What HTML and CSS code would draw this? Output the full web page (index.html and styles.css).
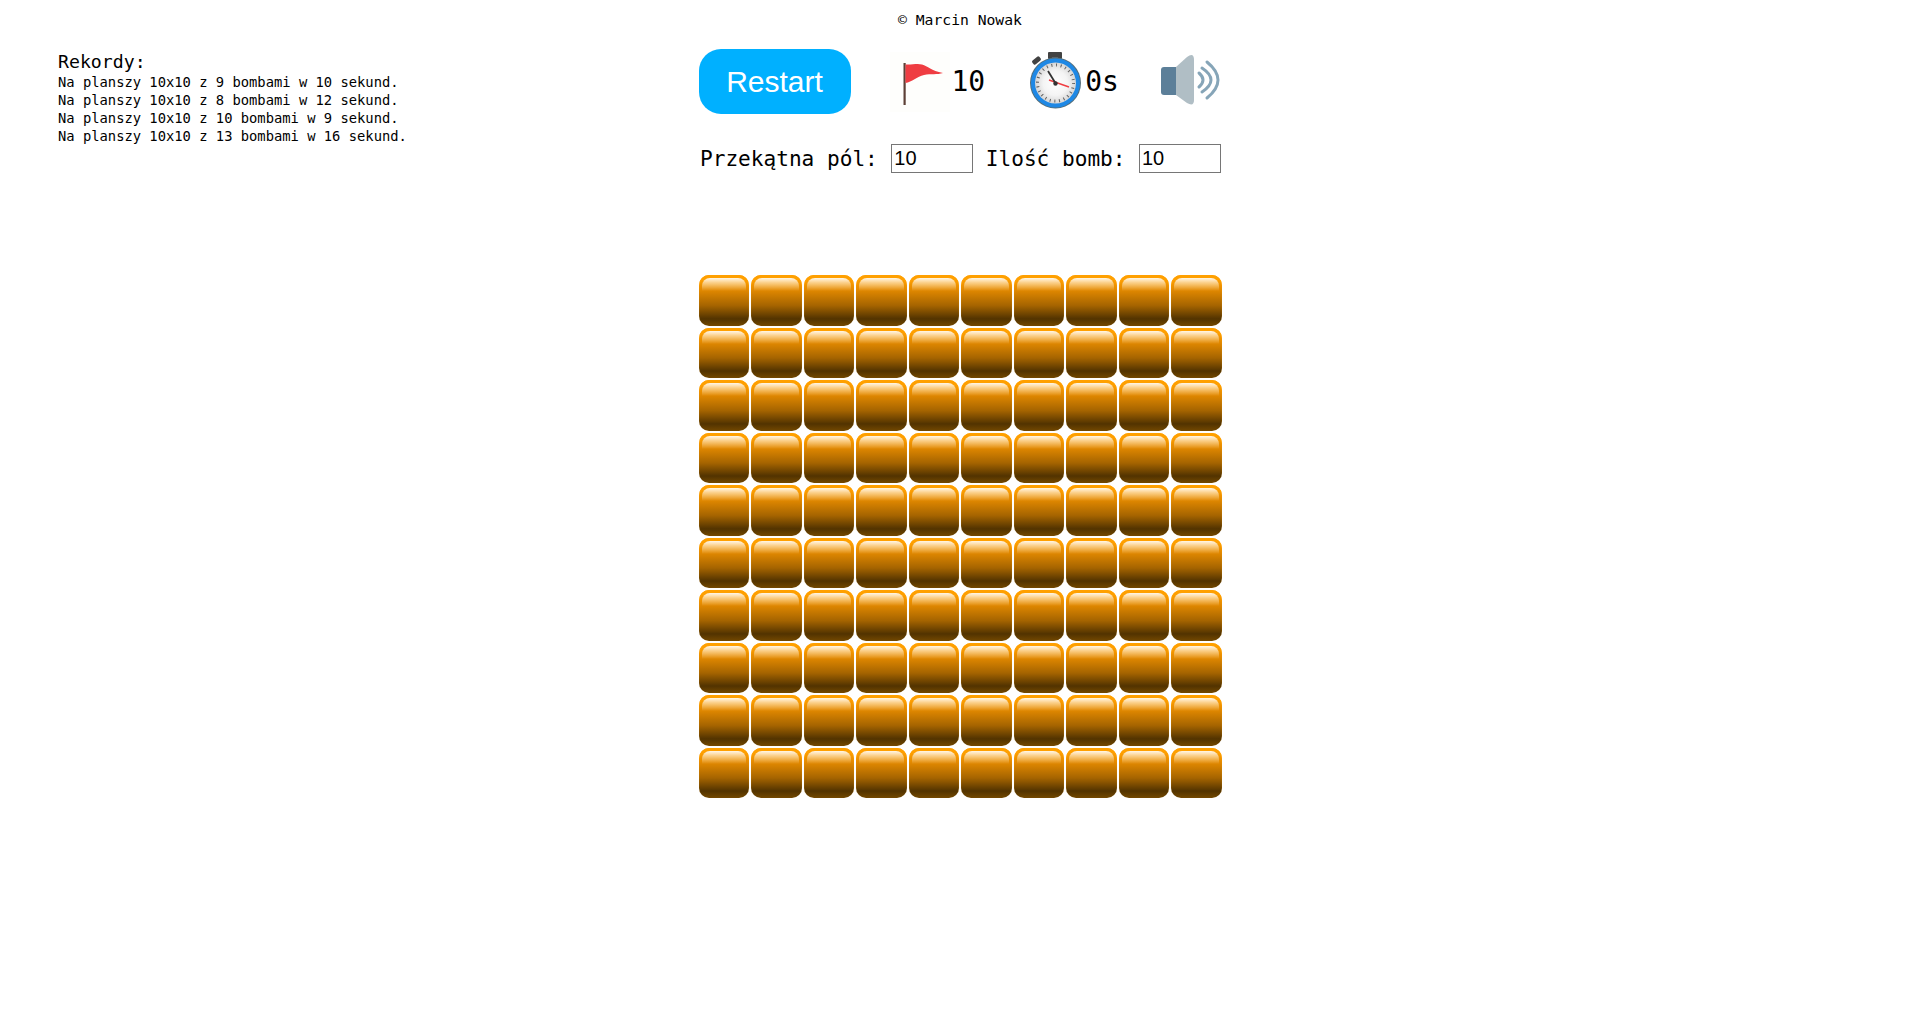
FILE: index.html
```html
<!DOCTYPE html>
<html lang="pl">
<head>
  <meta charset="UTF-8">
  <title>Saper</title>
  <link rel="stylesheet" href="styles.css">
</head>
<body>

<div class="author">© Marcin Nowak</div>

<div class="page">
  <div class="records">
    <div class="records-title">Rekordy:</div>
    <div>Na planszy 10x10 z 9 bombami w 10 sekund.</div>
    <div>Na planszy 10x10 z 8 bombami w 12 sekund.</div>
    <div>Na planszy 10x10 z 10 bombami w 9 sekund.</div>
    <div>Na planszy 10x10 z 13 bombami w 16 sekund.</div>
  </div>

  <div class="game">
    <div class="toolbar">
      <button class="restart">Restart</button>

      <svg class="icon flag-icon" viewBox="0 0 60 60">
        <rect x="13.5" y="11" width="2.2" height="42" fill="#5d4037"/>
        <path d="M15.5 12.5 C22 13 27 11 32 12.5 C38 14 41 19 53 21 C47 23 41 21.5 34 23 C27 24.5 22 30 15.5 31 Z" fill="#ef3d42"/>
      </svg>
      <span class="counter">10</span>

      <svg class="icon timer-icon" viewBox="0 0 60 60">
        <defs>
          <radialGradient id="face">
            <stop offset="0" stop-color="#ffffff"/>
            <stop offset="0.6" stop-color="#f4f4f4"/>
            <stop offset="1" stop-color="#d6d6d6"/>
          </radialGradient>
        </defs>
        <rect x="23" y="0" width="14" height="7" rx="1" fill="#424242"/>
        <rect x="27" y="5" width="6" height="4" fill="#616161"/>
        <rect x="7" y="6" width="9" height="5" rx="1.5" fill="#424242" transform="rotate(-40 11.5 8.5)"/>
        <circle cx="30.5" cy="31" r="25.5" fill="#546e7a"/>
        <circle cx="30.5" cy="31" r="24.5" fill="#1e88e5"/>
        <circle cx="30.5" cy="31" r="20.5" fill="url(#face)"/>
        <circle cx="30.5" cy="31" r="18" fill="none" stroke="#616161" stroke-width="3" stroke-dasharray="1 3.71"/>
        <path d="M24 28 L44 35" stroke="#ef3d42" stroke-width="1.4"/>
        <path d="M23 19 L31 32" stroke="#333" stroke-width="1.8"/>
        <circle cx="30.5" cy="31.5" r="2.2" fill="#333"/>
      </svg>
      <span class="counter timer-text">0s</span>

      <svg class="icon sound-icon" viewBox="0 0 62 60">
        <path d="M4 17 H17 V45 H4 Q1 45 1 42 V20 Q1 17 4 17 Z" fill="#5c7f99"/>
        <path d="M16 17 L27 7 Q34 2 34 10 V50 Q34 57 27 53 L16 45 Z" fill="#b0bec5"/>
        <g fill="none" stroke="#86a5b8" stroke-width="3" stroke-linecap="round">
          <path d="M39 23 Q47 30 39 37"/>
          <path d="M42 18 Q60 30 42 42"/>
          <path d="M47 12 Q69 30 47 48"/>
        </g>
      </svg>
    </div>

    <div class="settings">
      <label for="size">Przekątna pól:</label>
      <input type="text" id="size" value="10">
      <label for="bombs">Ilość bomb:</label>
      <input type="text" id="bombs" value="10">
    </div>

    <div class="board">
      <div class="cell"></div><div class="cell"></div><div class="cell"></div><div class="cell"></div><div class="cell"></div><div class="cell"></div><div class="cell"></div><div class="cell"></div><div class="cell"></div><div class="cell"></div>
      <div class="cell"></div><div class="cell"></div><div class="cell"></div><div class="cell"></div><div class="cell"></div><div class="cell"></div><div class="cell"></div><div class="cell"></div><div class="cell"></div><div class="cell"></div>
      <div class="cell"></div><div class="cell"></div><div class="cell"></div><div class="cell"></div><div class="cell"></div><div class="cell"></div><div class="cell"></div><div class="cell"></div><div class="cell"></div><div class="cell"></div>
      <div class="cell"></div><div class="cell"></div><div class="cell"></div><div class="cell"></div><div class="cell"></div><div class="cell"></div><div class="cell"></div><div class="cell"></div><div class="cell"></div><div class="cell"></div>
      <div class="cell"></div><div class="cell"></div><div class="cell"></div><div class="cell"></div><div class="cell"></div><div class="cell"></div><div class="cell"></div><div class="cell"></div><div class="cell"></div><div class="cell"></div>
      <div class="cell"></div><div class="cell"></div><div class="cell"></div><div class="cell"></div><div class="cell"></div><div class="cell"></div><div class="cell"></div><div class="cell"></div><div class="cell"></div><div class="cell"></div>
      <div class="cell"></div><div class="cell"></div><div class="cell"></div><div class="cell"></div><div class="cell"></div><div class="cell"></div><div class="cell"></div><div class="cell"></div><div class="cell"></div><div class="cell"></div>
      <div class="cell"></div><div class="cell"></div><div class="cell"></div><div class="cell"></div><div class="cell"></div><div class="cell"></div><div class="cell"></div><div class="cell"></div><div class="cell"></div><div class="cell"></div>
      <div class="cell"></div><div class="cell"></div><div class="cell"></div><div class="cell"></div><div class="cell"></div><div class="cell"></div><div class="cell"></div><div class="cell"></div><div class="cell"></div><div class="cell"></div>
      <div class="cell"></div><div class="cell"></div><div class="cell"></div><div class="cell"></div><div class="cell"></div><div class="cell"></div><div class="cell"></div><div class="cell"></div><div class="cell"></div><div class="cell"></div>
    </div>
  </div>
</div>

</body>
</html>
```
FILE: styles.css
```css
body {
  margin: 0;
  background-color: white;
  color: black;
  font-family: "DejaVu Sans Mono", monospace;
}
.author {
  height: 49px;
  padding-top: 11px;
  box-sizing: border-box;
  text-align: center;
  font-size: 14.7px;
  line-height: 18px;
}
.page {
  display: grid;
  grid-template-columns: 1fr 523px 1fr;
}
.records {
  padding-left: 58px;
  font-size: 13.8px;
  line-height: 18px;
}
.records-title {
  font-size: 18.2px;
  line-height: 22px;
  margin-top: 2px;
}
.toolbar {
  display: flex;
  align-items: center;
  height: 65px;
}
.restart {
  width: 152px;
  height: 65px;
  flex-shrink: 0;
  padding: 0;
  margin-right: 39px;
  border: none;
  border-radius: 22px;
  background-color: #00b0ff;
  color: white;
  font-family: "Liberation Sans", Arial, sans-serif;
  font-size: 30px;
  cursor: pointer;
}
.icon {
  display: block;
  flex-shrink: 0;
  width: 60px;
  height: 60px;
}
.flag-icon {
  background-color: #fefefc;
  margin-right: 2px;
}
.counter {
  font-size: 28px;
  margin-right: 40px;
}
.timer-text {
  margin-right: 41px;
}
.sound-icon {
  width: 62px;
  margin-bottom: 4px;
}
.settings {
  display: flex;
  align-items: center;
  height: 29px;
  margin-top: 30px;
  font-size: 21.1px;
  white-space: nowrap;
}
.settings label {
  margin-left: 1.5px;
  margin-right: 13.5px;
}
.settings input {
  width: 81.5px;
  height: 29px;
  box-sizing: border-box;
  flex-shrink: 0;
  padding: 1px 2px;
  margin-right: 11.5px;
  border: 1px solid #767676;
  font-family: "Liberation Sans", Arial, sans-serif;
  font-size: 20px;
}
.board {
  display: grid;
  grid-template-columns: repeat(10, 1fr);
  gap: 2px;
  margin-top: 102px;
}
.cell {
  position: relative;
  height: 50.5px;
  border-radius: 10px;
  background: linear-gradient(#ffa000 0, #ffa000 8%, #e48a00 28%, #a56400 60%, #523300 86%, #734800 100%);
  box-shadow: inset 0 2px 1px #ffa000;
}
.cell::before {
  content: "";
  position: absolute;
  top: 3px;
  left: 3px;
  right: 3px;
  height: 13px;
  border-radius: 8px 8px 0 0;
  background: linear-gradient(rgba(255, 255, 255, 0.9), rgba(255, 255, 255, 0.55) 35%, rgba(255, 255, 255, 0));
}
```
